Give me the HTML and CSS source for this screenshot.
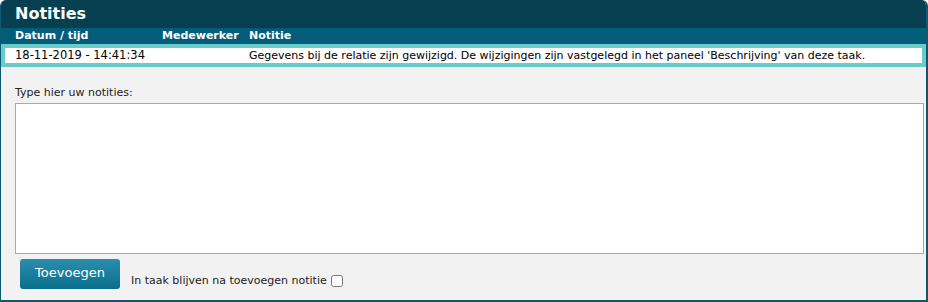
FILE: index.html
```html
<!DOCTYPE html>
<html lang="nl">
<head>
<meta charset="utf-8">
<link rel="stylesheet" href="styles.css">
</head>
<body>
<div class="panel">
  <div class="panel-title">Notities</div>
  <div class="cols">
    <div class="c-date">Datum / tijd</div>
    <div class="c-emp">Medewerker</div>
    <div class="c-note">Notitie</div>
  </div>
  <div class="row">
    <div class="c-date">18-11-2019 - 14:41:34</div>
    <div class="c-emp"></div>
    <div class="c-note">Gegevens bij de relatie zijn gewijzigd. De wijzigingen zijn vastgelegd in het paneel 'Beschrijving' van deze taak.</div>
  </div>
  <div class="body">
    <label class="lbl" for="notes">Type hier uw notities:</label>
    <textarea id="notes" class="notes"></textarea>
    <div class="actions">
      <button class="btn" type="button">Toevoegen</button>
      <label class="stay">In taak blijven na toevoegen notitie <input type="checkbox" class="cb"></label>
    </div>
  </div>
</div>
</body>
</html>
```

FILE: styles.css
```css
html, body {
  margin: 0;
  padding: 0;
  background: #ffffff;
}
body {
  font-family: "DejaVu Sans", Verdana, sans-serif;
  font-size: 11px;
  color: #000;
}
.panel {
  width: 928px;
  height: 302px;
  box-sizing: border-box;
  border: 2px solid #0b5a72;
  border-top: 0;
  border-left-width: 1px;
  border-radius: 6px 6px 0 0;
  background: #f2f2f2;
  display: flex;
  flex-direction: column;
  overflow: hidden;
}
.panel-title {
  background: #063f4f;
  color: #fff;
  font-weight: bold;
  font-size: 16px;
  height: 28px;
  line-height: 28px;
  padding-left: 14px;
}
.cols, .row {
  display: flex;
}
.cols {
  background: #035d7a;
  color: #fff;
  font-weight: bold;
  height: 16px;
  line-height: 16px;
  padding-left: 14px;
}
.row {
  background: #fff;
  border: 4px solid #68ccca;
  height: 15px;
  line-height: 15px;
  padding-left: 10px;
}
.c-date { width: 147px; font-size: 11.5px; }
.cols .c-date { font-size: 11px; }
.c-emp { width: 87px; }
.c-note { flex: 1; }
.body {
  flex: 1;
  padding: 19px 0 0 14px;
  display: flex;
  flex-direction: column;
}
.lbl {
  color: #222;
  line-height: 14px;
  margin-bottom: 3px;
}
.notes {
  width: 909px;
  height: 151px;
  box-sizing: border-box;
  border: 1px solid #a9a9a9;
  background: #fff;
  resize: none;
  margin: 0;
}
.actions {
  display: flex;
  align-items: flex-end;
  gap: 11px;
  padding: 5px 0 0 5px;
}
.btn {
  width: 100px;
  height: 30px;
  border: 0;
  border-radius: 3px;
  background: linear-gradient(#2a8fac, #0a6d8c);
  color: #fff;
  font-family: "DejaVu Sans", Verdana, sans-serif;
  font-size: 13px;
  font-weight: normal;
  padding: 0 0 4px 0;
}
.stay {
  color: #222;
  display: flex;
  align-items: center;
  gap: 4px;
  margin-bottom: 1px;
  line-height: 14px;
}
.cb {
  width: 12px;
  height: 12px;
  margin: 0;
}
```
